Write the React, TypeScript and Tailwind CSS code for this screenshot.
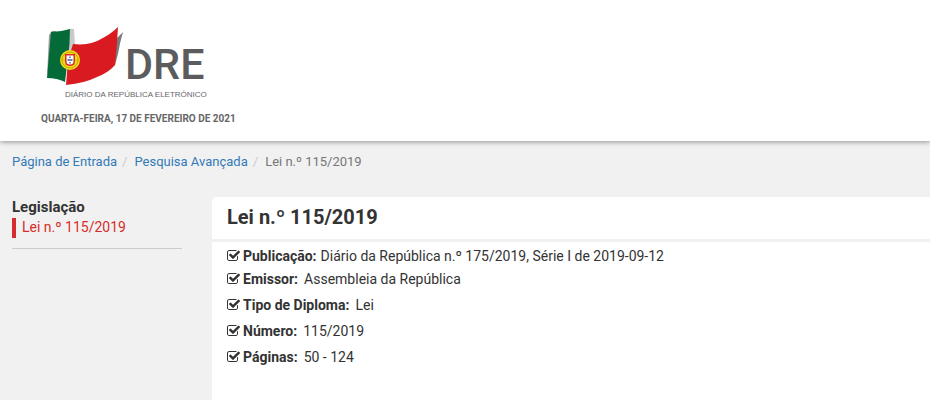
import React from 'react'

const details = [
    { label: 'Emissor:', value: 'Assembleia da República' },
    { label: 'Tipo de Diploma:', value: 'Lei' },
    { label: 'Número:', value: '115/2019' },
    { label: 'Páginas:', value: '50 - 124' },
]

const CheckIcon = () => (
    <svg viewBox="64 0 1664 1792" className="w-[13px] h-[14px] mr-[3px] shrink-0" fill="currentColor" aria-hidden="true">
        <path d="M1472 930v318q0 119-84.5 203.5t-203.5 84.5h-832q-119 0-203.5-84.5t-84.5-203.5v-832q0-119 84.5-203.5t203.5-84.5h832q63 0 117 25 15 7 18 23 3 17-9 29l-49 49q-10 10-23 10-3 0-9-2-23-6-45-6h-832q-66 0-113 47t-47 113v832q0 66 47 113t113 47h832q66 0 113-47t47-113v-254q0-13 9-22l64-64q10-10 23-10 6 0 12 3 20 8 20 29zm231-489l-814 814q-24 24-57 24t-57-24l-430-430q-24-24-24-57t24-57l110-110q24-24 57-24t57 24l263 263 647-647q24-24 57-24t57 24l110 110q24 24 24 57t-24 57z" />
    </svg>
)

const Logo = () => (
    <svg viewBox="40 20 170 80" className="w-[170px] h-20" role="img" aria-label="DRE">
        {/* folds behind the flag */}
        <path d="M49 35L52 31L56 31L50 60L47 77Z" fill="#9a9a9a" />
        <path d="M68 29L74 29L75 45L69 56Z" fill="#c9c9c9" />
        <path d="M117 38L123 32Q120 42 118 54L115 65L113 66Z" fill="#7b7b7b" />
        <path d="M51 32Q60 32 70 29Q70 44 68 58L65 82Q57 78 47 78Z" fill="#046a38" />
        <path d="M73 44Q90 46 101 39Q111 34 118 27Q117 46 115 65Q108 73 97 77Q85 83 66 85L68 60Z" fill="#da1a21" />
        {/* armillary sphere and shield */}
        <circle cx="70" cy="60" r="10" fill="#f1dc1b" />
        <circle cx="70" cy="60" r="8" fill="none" stroke="#c9a800" strokeWidth="1" />
        <path d="M61 60H79M64 54L76 66M64 66L76 54" stroke="#c9a800" strokeWidth="0.8" />
        <path d="M65 54H75V61Q75 66 70 66Q65 66 65 61Z" fill="#e02b2b" />
        <path d="M66.5 55.5H73.5V61Q73.5 64.5 70 64.5Q66.5 64.5 66.5 61Z" fill="#fff" />
        <path d="M70 56.5V58M70 59V61M70 62V63.5M67.5 60H69M71 60H72.5" stroke="#29539c" strokeWidth="1.3" />
        <text x="125" y="79" fontSize="43" fontWeight="500" fill="#5c5c5e" fontFamily="Roboto, sans-serif">DRE</text>
        <text x="65" y="97" fontSize="8" fill="#66666a" fontFamily="'Liberation Sans', sans-serif">DIÁRIO DA REPÚBLICA ELETRÓNICO</text>
    </svg>
)

const App = () => {
    return (
        <div className="min-h-screen flex flex-col bg-[#f1f1f1] text-[#333] text-sm font-[Roboto,sans-serif]">
            <header className="bg-white pt-5 pb-[14px] shadow-[0_1px_5px_rgba(0,0,0,0.4)]">
                <a href="#" className="block w-fit ml-10">
                    <Logo />
                </a>
                <p className="ml-[41px] mt-[11px] text-[10px] leading-4 font-bold text-[#666]">
                    QUARTA-FEIRA, 17 DE FEVEREIRO DE 2021
                </p>
            </header>

            <nav className="px-3 pt-[11px] text-[13px] leading-5" aria-label="breadcrumb">
                <ol className="flex">
                    <li><a href="#" className="text-[#337ab7]">Página de Entrada</a></li>
                    <li><span className="px-[5px] mr-[2px] text-[#ccc]">/</span><a href="#" className="text-[#337ab7]">Pesquisa Avançada</a></li>
                    <li className="text-[#777]"><span className="px-[5px] mr-[2px] text-[#ccc]">/</span>Lei n.º 115/2019</li>
                </ol>
            </nav>

            <div className="flex grow pt-[25px] pl-3">
                <aside className="w-[170px] mr-[30px] shrink-0">
                    <h2 className="text-[15px] leading-[21px] font-bold">Legislação</h2>
                    <a href="#" className="block border-l-4 border-[#d82c2c] pl-[6px] pb-[2px] leading-[18px] text-[#d82c2c]">Lei n.º 115/2019</a>
                    <hr className="mt-[10px] border-[#ccc]" />
                </aside>

                <main className="grow bg-white rounded-tl-[5px]">
                    <h1 className="border-b-3 border-[#f1f1f1] px-[15px] pt-2 pb-[10px] text-xl leading-6 font-bold">
                        Lei n.º 115/2019
                    </h1>
                    <ul className="px-[15px] pt-1">
                        <li className="flex items-center leading-5">
                            <CheckIcon />
                            <strong className="mr-1">Publicação:</strong>
                            Diário da República n.º 175/2019, Série I de 2019-09-12
                        </li>
                        {details.map(({ label, value }) => (
                            <li key={label} className="flex items-center mt-[3px] mb-[6px] h-5 leading-5 last:mb-0 [&+&]:mt-[6px]">
                                <CheckIcon />
                                <strong className="mr-[6px]">{label}</strong>
                                {value}
                            </li>
                        ))}
                    </ul>
                </main>
            </div>
        </div>
    )
}

export default App
